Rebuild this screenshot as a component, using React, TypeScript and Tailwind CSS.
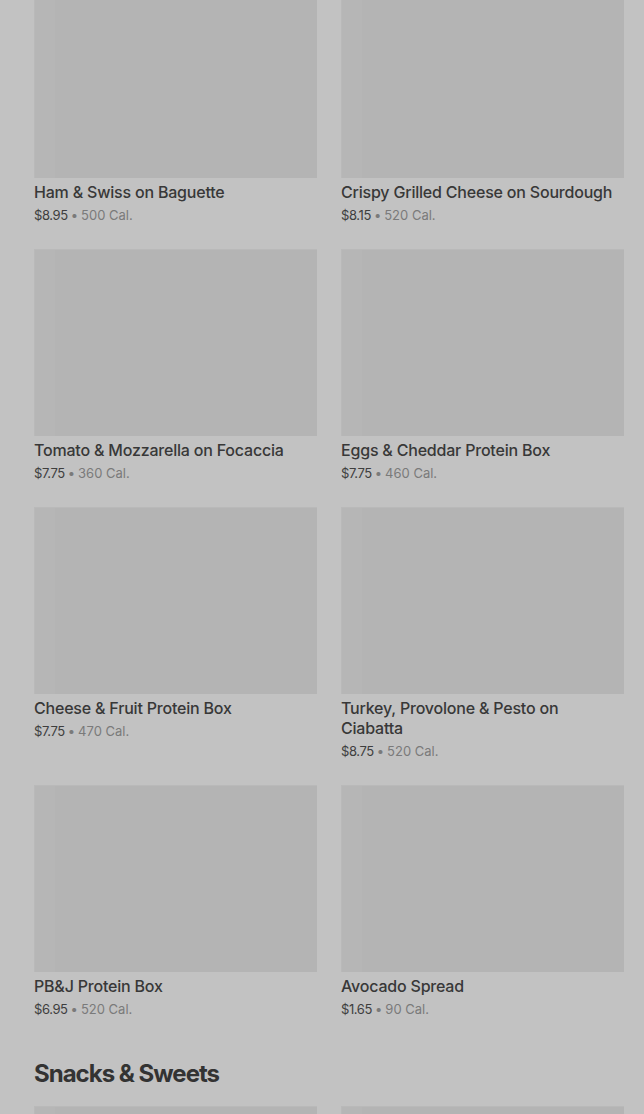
const items = [
  { name: 'Ham & Swiss on Baguette', price: '$8.95', cal: '500 Cal.' },
  { name: 'Crispy Grilled Cheese on Sourdough', price: '$8.15', cal: '520 Cal.' },
  { name: 'Tomato & Mozzarella on Focaccia', price: '$7.75', cal: '360 Cal.' },
  { name: 'Eggs & Cheddar Protein Box', price: '$7.75', cal: '460 Cal.' },
  { name: 'Cheese & Fruit Protein Box', price: '$7.75', cal: '470 Cal.' },
  { name: 'Turkey, Provolone & Pesto on Ciabatta', price: '$8.75', cal: '520 Cal.' },
  { name: 'PB&J Protein Box', price: '$6.95', cal: '520 Cal.' },
  { name: 'Avocado Spread', price: '$1.65', cal: '90 Cal.' },
]

function Placeholder({ className = '' }: { className?: string }) {
  return (
    <div className={`relative bg-[#b4b4b4] border-t border-l border-[#b9b9b9] ${className}`}>
      <div className="absolute left-0 top-0 w-5 h-full bg-[#b6b6b6]" />
    </div>
  )
}

export default function App() {
  return (
    <div
      className="min-h-screen bg-[#c2c2c2] overflow-hidden h-[1114px]"
      style={{ fontFamily: 'Inter, "Noto Sans", sans-serif' }}
    >
      <div className="-mt-[9px] pl-[34px] pr-[20px]">
        <div className="grid grid-cols-2 gap-x-6 gap-y-[25px]">
          {items.map((item, i) => (
            <div key={i}>
              <Placeholder className="h-[187px]" />
              <h3 className="mt-1 text-[16px] leading-5 font-medium text-[#383838] tracking-[-0.2px]">
                {item.name}
              </h3>
              <p className="mt-1 text-[13px] leading-[18px] text-[#7a7a7a]">
                <span className="text-[#3e3e3e] tracking-[-0.4px]">{item.price}</span>
                <span className="mx-[3px]">•</span>
                {item.cal}
              </p>
            </div>
          ))}
        </div>

        <h2 className="mt-10 text-[24px] leading-8 font-bold text-[#333333] tracking-[-1px]">
          Snacks &amp; Sweets
        </h2>

        <div className="mt-4 grid grid-cols-2 gap-x-6">
          <Placeholder className="h-[187px]" />
          <Placeholder className="h-[187px]" />
        </div>
      </div>
    </div>
  )
}
